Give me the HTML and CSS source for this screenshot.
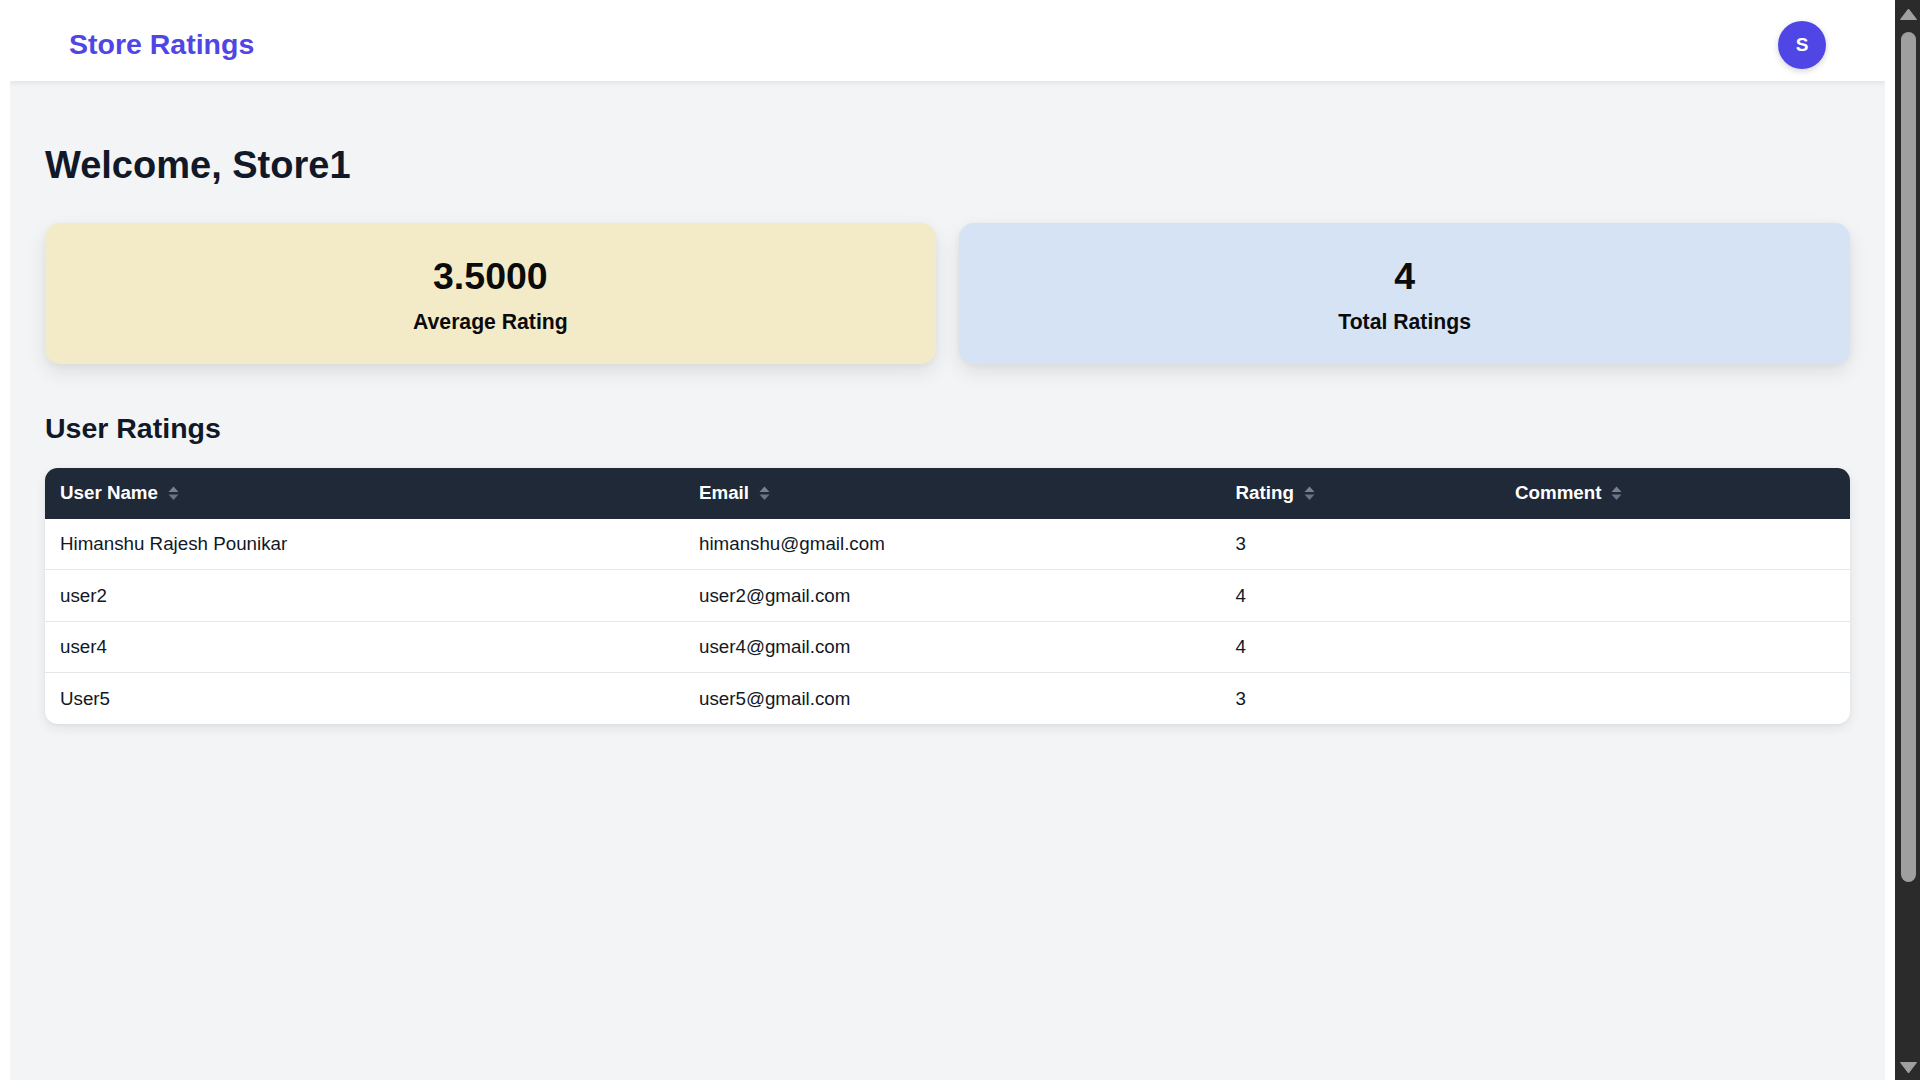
FILE: index.html
```html
<!DOCTYPE html>
<html lang="en">
<head>
<meta charset="utf-8">
<title>Store Ratings</title>
<link rel="stylesheet" href="styles.css">
</head>
<body>
<nav class="navbar">
  <div class="brand">Store Ratings</div>
  <div class="avatar">S</div>
</nav>
<main class="main">
  <h1 class="welcome">Welcome, Store1</h1>
  <section class="stats">
    <div class="card card-yellow">
      <div class="card-value">3.5000</div>
      <div class="card-label">Average Rating</div>
    </div>
    <div class="card card-blue">
      <div class="card-value">4</div>
      <div class="card-label">Total Ratings</div>
    </div>
  </section>
  <h2 class="section-title">User Ratings</h2>
  <div class="table-wrap">
    <table class="ratings">
      <colgroup>
        <col class="col-name">
        <col class="col-email">
        <col class="col-rating">
        <col class="col-comment">
      </colgroup>
      <thead>
        <tr>
          <th><span class="th-inner">User Name <svg class="sort" viewBox="0 0 11 15" width="11" height="15"><path d="M5.5 0.5 L10.5 6 L0.5 6 Z" fill="#7b818c"/><path d="M0.5 8.5 L10.5 8.5 L5.5 14 Z" fill="#6b7280"/></svg></span></th>
          <th><span class="th-inner">Email <svg class="sort" viewBox="0 0 11 15" width="11" height="15"><path d="M5.5 0.5 L10.5 6 L0.5 6 Z" fill="#7b818c"/><path d="M0.5 8.5 L10.5 8.5 L5.5 14 Z" fill="#6b7280"/></svg></span></th>
          <th><span class="th-inner">Rating <svg class="sort" viewBox="0 0 11 15" width="11" height="15"><path d="M5.5 0.5 L10.5 6 L0.5 6 Z" fill="#7b818c"/><path d="M0.5 8.5 L10.5 8.5 L5.5 14 Z" fill="#6b7280"/></svg></span></th>
          <th><span class="th-inner">Comment <svg class="sort" viewBox="0 0 11 15" width="11" height="15"><path d="M5.5 0.5 L10.5 6 L0.5 6 Z" fill="#7b818c"/><path d="M0.5 8.5 L10.5 8.5 L5.5 14 Z" fill="#6b7280"/></svg></span></th>
        </tr>
      </thead>
      <tbody>
        <tr><td>Himanshu Rajesh Pounikar</td><td>himanshu@gmail.com</td><td>3</td><td></td></tr>
        <tr><td>user2</td><td>user2@gmail.com</td><td>4</td><td></td></tr>
        <tr><td>user4</td><td>user4@gmail.com</td><td>4</td><td></td></tr>
        <tr><td>User5</td><td>user5@gmail.com</td><td>3</td><td></td></tr>
      </tbody>
    </table>
  </div>
</main>
<div class="scrollbar" aria-hidden="true">
  <div class="sb-btn">
    <svg width="17" height="12" viewBox="0 0 17 12"><path d="M8.5 1 L16.5 11.5 L0.5 11.5 Z" fill="#a0a0a0" stroke="#a0a0a0" stroke-linejoin="round"/></svg>
  </div>
  <div class="sb-thumb"></div>
  <div class="sb-space"></div>
  <div class="sb-btn sb-btn-down">
    <svg width="17" height="12" viewBox="0 0 17 12"><path d="M0.5 0.5 L16.5 0.5 L8.5 11 Z" fill="#a0a0a0" stroke="#a0a0a0" stroke-linejoin="round"/></svg>
  </div>
</div>
</body>
</html>
```
FILE: styles.css
```css
html {
  background: #ffffff;
}

body {
  margin: 10px 35px 10px 10px;
  background: #ffffff;
  font-family: "Liberation Sans", Arial, sans-serif;
  color: #111827;
}

.scrollbar {
  position: fixed;
  top: 0;
  right: 0;
  width: 25px;
  height: 100vh;
  box-sizing: border-box;
  padding-left: 2px;
  background: #2b2b2b;
  display: flex;
  flex-direction: column;
  align-items: center;
  z-index: 10;
}

.sb-btn {
  height: 26px;
  flex: none;
  display: flex;
  align-items: center;
  justify-content: center;
  padding-top: 2px;
  box-sizing: border-box;
}

.sb-btn svg {
  display: block;
}

.sb-btn-down {
  padding-top: 0;
  padding-bottom: 6px;
  align-items: flex-end;
}

.sb-thumb {
  flex: none;
  margin-top: 6px;
  width: 15px;
  height: 850px;
  border-radius: 7.5px;
  background: #9f9f9f;
}

.sb-space {
  flex: 1;
}

.navbar {
  position: relative;
  z-index: 1;
  height: 71px;
  box-sizing: border-box;
  padding: 0 59px 0 59px;
  background: #ffffff;
  display: flex;
  align-items: center;
  justify-content: space-between;
  box-shadow: 0 2px 5px rgba(0, 0, 0, 0.08);
}

.brand {
  font-size: 28.5px;
  font-weight: 700;
  color: #4f46e5;
  margin-top: -2px;
}

.avatar {
  width: 48px;
  height: 48px;
  margin-top: -2px;
  border-radius: 50%;
  background: #4f46e5;
  color: #ffffff;
  display: flex;
  align-items: center;
  justify-content: center;
  font-size: 19px;
  font-weight: 700;
  box-shadow: 0 2px 6px rgba(0, 0, 0, 0.18);
}

.main {
  background: #f3f4f6;
  padding: 63px 35px 35px;
  min-height: 1221px;
  box-sizing: border-box;
}

.welcome {
  margin: 0 0 37px;
  font-size: 38px;
  line-height: 42px;
  font-weight: 700;
  color: #111827;
}

.stats {
  display: grid;
  grid-template-columns: 1fr 1fr;
  gap: 23.5px;
}

.card {
  border-radius: 15px;
  padding: 31.5px 20px 30px;
  text-align: center;
  box-shadow: 0 8px 20px rgba(0, 0, 0, 0.09), 0 2px 6px rgba(0, 0, 0, 0.04);
  color: #0b0b0b;
}

.card-yellow {
  background: #f3eac8;
}

.card-blue {
  background: #d5e3f5;
}

.card-value {
  font-size: 37.5px;
  line-height: 42px;
  font-weight: 700;
}

.card-label {
  margin-top: 13px;
  font-size: 21.2px;
  line-height: 24px;
  font-weight: 700;
}

.section-title {
  margin: 48.5px 0 23.5px;
  font-size: 28.5px;
  line-height: 32px;
  font-weight: 700;
  color: #111827;
}

.table-wrap {
  background: #ffffff;
  border-radius: 12.5px;
  overflow: hidden;
  box-shadow: 0 4px 12px rgba(0, 0, 0, 0.08), 0 1px 3px rgba(0, 0, 0, 0.04);
}

.ratings {
  width: 100%;
  border-collapse: collapse;
  table-layout: fixed;
  font-size: 18.75px;
}

.col-name {
  width: 639px;
}

.col-email {
  width: 536.5px;
}

.col-rating {
  width: 279.5px;
}

.col-comment {
  width: 350px;
}

.ratings th {
  background: #1f2937;
  color: #ffffff;
  font-weight: 700;
  text-align: left;
  padding: 14.5px 15px 15px;
  line-height: 21.5px;
}

.th-inner {
  display: inline-flex;
  align-items: center;
  gap: 10px;
}

.sort {
  display: block;
  margin-top: 1px;
}

.ratings td {
  padding: 14.5px 15px 14.5px;
  line-height: 21.5px;
  color: #111827;
  text-align: left;
}

.ratings tbody tr {
  border-bottom: 1px solid #e5e7eb;
}

.ratings tbody tr:last-child {
  border-bottom: none;
}
```
